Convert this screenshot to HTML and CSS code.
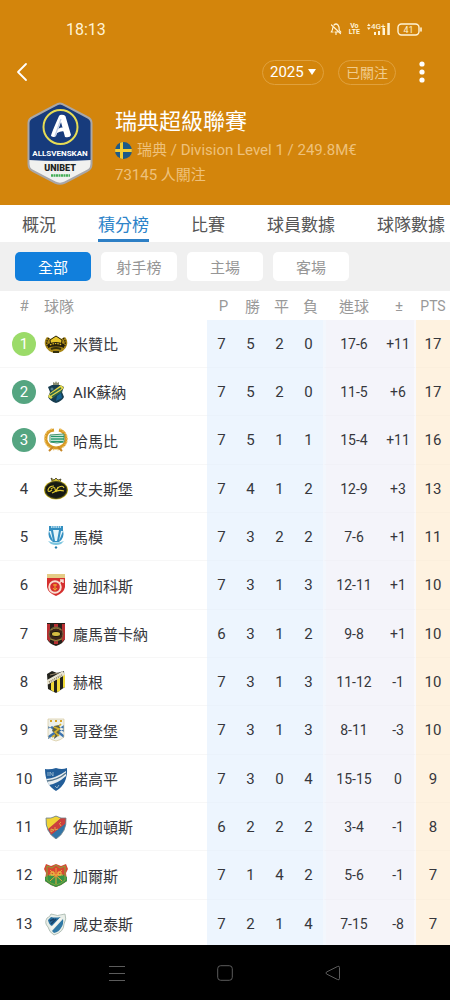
FILE: index.html
```html
<!DOCTYPE html>
<html lang="zh-Hant">
<head>
    <meta charset="utf-8">
    <meta name="viewport" content="width=device-width, initial-scale=1">
    <title>瑞典超級聯賽</title>
    <link rel="stylesheet" href="styles.css">
</head>
<body>
    <header class="header">
        <div class="status-bar">
            <span class="clock">18:13</span>
            <div class="status-icons">
                <svg width="12" height="14" viewBox="0 0 12 14" fill="none" stroke="#fff3d6" stroke-width="1.2" stroke-linecap="round" stroke-linejoin="round">
                    <path d="M4 3Q6 1 8 3Q9.300 4.500 9.200 8L10.800 10H5M2.800 5.500Q2.800 8 1.200 10H3M6 10V12.500M1.500 3L10.500 11.500"/>
                </svg>
                <span class="volte"><span>Vo</span><span>LTE</span></span>
                <svg width="23" height="14" viewBox="0 0 23 14" fill="#fff3d6">
                    <path d="M0 4L1.800 1.500L3.600 4ZM0 5.500H3.600L1.800 8Z"/>
                    <text x="4" y="7" class="svg-net">4G+</text>
                    <path d="M7 10H9V13H7ZM11 9H13V13H11ZM15.500 6H18V13H15.500ZM20.300 1H22.800V13H20.300Z"/>
                </svg>
                <svg width="25" height="13" viewBox="0 0 25 13" fill="none" stroke="#fff3d6">
                    <rect x="1" y="1" width="21" height="11" rx="3.500" stroke-width="1.400"/>
                    <path d="M24 5V8" stroke-width="1.600" stroke-linecap="round"/>
                    <text x="11.500" y="9.500" text-anchor="middle" class="svg-battery">41</text>
                </svg>
            </div>
        </div>

        <div class="toolbar">
            <button type="button" class="icon-button back" aria-label="返回">
                <svg width="12" height="20" viewBox="0 0 12 20" fill="none" stroke="#fff" stroke-width="1.800" stroke-linecap="round" stroke-linejoin="round"><path d="M10 2L2 10L10 18"/></svg>
            </button>
            <label class="pill season">
                <select aria-label="賽季">
                    <option>2025</option>
                </select>
                <svg width="8" height="6" viewBox="0 0 8 6" fill="#fff"><path d="M0 0H8L4 6Z"/></svg>
            </label>
            <button type="button" class="pill follow">已關注</button>
            <button type="button" class="icon-button" aria-label="更多">
                <svg width="6" height="22" viewBox="0 0 6 22" fill="#fff"><circle cx="3" cy="3" r="2.600"/><circle cx="3" cy="11" r="2.600"/><circle cx="3" cy="19" r="2.600"/></svg>
            </button>
        </div>

        <div class="league">
            <svg class="league-logo" width="66" height="84" viewBox="0 0 66 84">
                <defs>
                    <clipPath id="logoShape"><path d="M33 2Q35 2 38 4L60 15Q64 17 64 21V62Q64 67 60 69L38 80Q33 83 28 80L6 69Q2 67 2 62V21Q2 17 6 15L28 4Q31 2 33 2Z"/></clipPath>
                </defs>
                <g clip-path="url(#logoShape)">
                    <rect width="66" height="84" fill="#173b7c"/>
                    <path d="M0 58Q33 60 66 58V84H0Z" fill="#f1f1ef"/>
                </g>
                <path d="M33 1.500Q35 1.500 38 3.500L60 15Q64.500 17 64.500 21V62Q64.500 67 60 69L38 80.500Q33 83 28 80.500L6 69Q1.500 67 1.500 62V21Q1.500 17 6 15L28 3.500Q31 1.500 33 1.500Z" fill="none" stroke="#a9a7a8" stroke-width="2"/>
                <circle cx="33.500" cy="25" r="17" fill="#173b7c" stroke="#e6dc55" stroke-width="2"/>
                <path d="M24 34Q24 32 32 14Q33 12 37 13Q39 14 39 16L44 33Q43 36 38 35L34 20L29 34Q27 36 24 34Z" fill="#fff"/>
                <path d="M30 29Q32 24 38 26L39 30Q35 28 30 31Z" fill="#fff"/>
                <path d="M34 17L28 34" stroke="#bdcbe5" stroke-width="1.200"/>
                <text x="33" y="54" text-anchor="middle" class="logo-name">ALLSVENSKAN</text>
                <text x="33" y="69" text-anchor="middle" class="logo-sponsor">UNIBET</text>
                <path d="M24 73.500H43" stroke="#43ad55" stroke-width="2.500" stroke-dasharray="2 .5"/>
            </svg>
            <div class="league-info">
                <h1>瑞典超級聯賽</h1>
                <p>
                    <svg width="17" height="17" viewBox="0 0 17 17">
                        <circle cx="8.500" cy="8.500" r="8.500" fill="#1d5a88"/>
                        <path d="M5 .8Q6.500 0 8 0V17Q6.500 17 5 16.200ZM.2 7H16.800V10H.2Q0 8.500 .2 7Z" fill="#f3cd35"/>
                    </svg>
                    瑞典 / Division Level 1 / 249.8M€
                </p>
                <p>73145 人關注</p>
            </div>
        </div>
    </header>

    <nav class="tabs">
        <a href="#">概況</a>
        <a href="#" class="active">積分榜</a>
        <a href="#">比賽</a>
        <a href="#">球員數據</a>
        <a href="#">球隊數據</a>
    </nav>

    <div class="filters">
        <button type="button" class="selected">全部</button>
        <button type="button">射手榜</button>
        <button type="button">主場</button>
        <button type="button">客場</button>
    </div>

    <main class="standings">
        <table>
            <thead>
                <tr>
                    <th class="rank">#</th>
                    <th class="team">球隊</th>
                    <th class="stat">P</th>
                    <th class="stat">勝</th>
                    <th class="stat">平</th>
                    <th class="stat">負</th>
                    <th class="goals">進球</th>
                    <th class="diff">±</th>
                    <th class="pts">PTS</th>
                </tr>
            </thead>
            <tbody>
                <tr>
                    <td class="rank"><span class="place first">1</span></td>
                    <td class="team"><div class="club">
                        <svg class="crest" viewBox="0 0 24 24">
                            <path d="M3 5Q0 8 1 13Q3 20 12 21Q21 20 23 13Q24 8 21 5L17 7Q12 2 7 7Z" fill="#a88717"/>
                            <path d="M5 6Q1 10 4 15M19 6Q23 10 20 15" fill="none" stroke="#33290c" stroke-width="1.500" stroke-dasharray="1.500 1"/>
                            <path d="M6 8L9 6L12 4L15 6L18 8L17 14H7Z" fill="#e8c72c" stroke="#2c260c"/>
                            <path d="M4 12Q12 8 20 12V16Q12 12 4 16Z" fill="#231e0d"/>
                            <path d="M6 13Q12 10 18 13" fill="none" stroke="#e3bf25" stroke-width="1.200" stroke-dasharray="1.500 1"/>
                            <path d="M7 17Q12 15 17 17M9 20H15" fill="none" stroke="#36300d" stroke-width="2"/>
                        </svg>米贊比</div></td>
                    <td class="stat">7</td><td class="stat">5</td><td class="stat">2</td><td class="stat">0</td>
                    <td class="goals">17-6</td><td class="diff">+11</td><td class="pts">17</td>
                </tr>
                <tr>
                    <td class="rank"><span class="place">2</span></td>
                    <td class="team"><div class="club">
                        <svg class="crest" viewBox="0 0 24 24">
                            <path d="M9 5V2L11 3L12 1L13 3L15 2V5Z" fill="#888c70"/>
                            <path d="M4 7L8 5H16L20 7L18 12L20 17Q18 21 12 23Q6 21 4 17L6 12Z" fill="#173d50"/>
                            <path d="M4 17L6 13L17 5L20 8L7 19Z" fill="#e5d64a"/>
                            <path d="M6 15L17 8M8 17L18 11" stroke="#2e674a" stroke-width="1.500"/>
                            <path d="M13 16L17 13L18 18L12 21Z" fill="#176392"/>
                            <circle cx="8" cy="9" r="1.500" fill="#55828d"/>
                        </svg>AIK蘇納</div></td>
                    <td class="stat">7</td><td class="stat">5</td><td class="stat">2</td><td class="stat">0</td>
                    <td class="goals">11-5</td><td class="diff">+6</td><td class="pts">17</td>
                </tr>
                <tr>
                    <td class="rank"><span class="place">3</span></td>
                    <td class="team"><div class="club">
                        <svg class="crest" viewBox="0 0 24 24">
                            <path d="M10 2Q1 3 2 12Q3 19 12 20Q22 19 22 11Q22 4 15 2" fill="none" stroke="#d89a24" stroke-width="3"/>
                            <path d="M8 1Q0 4 1 13Q3 20 11 22M16 1Q24 5 23 13Q21 20 13 22" fill="none" stroke="#efc261" stroke-dasharray="1.500 1.500" stroke-width="1.500"/>
                            <path d="M6 7L20 6V14Q13 16 6 14Z" fill="#f3faf4" stroke="#48956f"/>
                            <path d="M7 8.500H20M7 11H20M7 13.500H19" stroke="#27966b" stroke-width="1.300"/>
                            <path d="M9 19L5 23M14 19L18 23" stroke="#c78626" stroke-width="2"/>
                        </svg>哈馬比</div></td>
                    <td class="stat">7</td><td class="stat">5</td><td class="stat">1</td><td class="stat">1</td>
                    <td class="goals">15-4</td><td class="diff">+11</td><td class="pts">16</td>
                </tr>
                <tr>
                    <td class="rank">4</td>
                    <td class="team"><div class="club">
                        <svg class="crest" viewBox="0 0 24 24">
                            <path d="M8 4L7 1L10 3L12 1L14 3L17 2L16 5Z" fill="#d1ba31" stroke="#292817" stroke-width=".7"/>
                            <ellipse cx="12" cy="13" rx="12" ry="9.500" fill="#dac42d"/>
                            <ellipse cx="12" cy="13" rx="11" ry="8.500" fill="#171a13" stroke="#4a481b"/>
                            <path d="M10 9Q5 9 4 13Q4 16 8 13M7 12Q11 9 11 12T15 10Q19 8 20 11M8 16Q14 12 20 14M14 10L12 15" fill="none" stroke="#e1ca32" stroke-width="1.100"/>
                        </svg>艾夫斯堡</div></td>
                    <td class="stat">7</td><td class="stat">4</td><td class="stat">1</td><td class="stat">2</td>
                    <td class="goals">12-9</td><td class="diff">+3</td><td class="pts">13</td>
                </tr>
                <tr>
                    <td class="rank">5</td>
                    <td class="team"><div class="club">
                        <svg class="crest" viewBox="0 0 24 24">
                            <path d="M5 1H19V5Q21 13 15 17H9Q3 13 5 5Z" fill="#338fc1"/>
                            <path d="M7 2H17" stroke="#d9f2fb" stroke-width="1.500" stroke-dasharray="1.500 .7"/>
                            <path d="M9 5H15L13 16H11ZM5 6H7L9 16ZM19 6H17L15 16Z" fill="#e4f5fa"/>
                            <path d="M4 16Q12 19 20 16L17 19Q12 21 7 19Z" fill="#7bc5df"/>
                            <path d="M12 21L13.500 22.500L12 24L10.500 22.500Z" fill="#267caa"/>
                        </svg>馬模</div></td>
                    <td class="stat">7</td><td class="stat">3</td><td class="stat">2</td><td class="stat">2</td>
                    <td class="goals">7-6</td><td class="diff">+1</td><td class="pts">11</td>
                </tr>
                <tr>
                    <td class="rank">6</td>
                    <td class="team"><div class="club">
                        <svg class="crest" viewBox="0 0 24 24">
                            <path d="M3 2H21V14Q20 20 12 23Q4 20 3 14Z" fill="#d52f2e"/>
                            <path d="M3 1H21V5H3Z" fill="#e5cc86"/>
                            <circle cx="11" cy="14" r="5.800" fill="none" stroke="#f8ded1" stroke-width="1.900"/>
                            <path d="M15 10L19 7M16 7H19V10" fill="none" stroke="#f8ded1" stroke-width="1.500"/>
                            <path d="M9 12H13M11 11V17M9 15Q11 19 13 15" fill="none" stroke="#efb32d"/>
                        </svg>迪加科斯</div></td>
                    <td class="stat">7</td><td class="stat">3</td><td class="stat">1</td><td class="stat">3</td>
                    <td class="goals">12-11</td><td class="diff">+1</td><td class="pts">10</td>
                </tr>
                <tr>
                    <td class="rank">7</td>
                    <td class="team"><div class="club">
                        <svg class="crest" viewBox="0 0 24 24">
                            <path d="M3 1H21V17Q19 22 12 24Q5 22 3 17Z" fill="#272019"/>
                            <path d="M3 2H6V20L3 17ZM10 2H14V22H10ZM18 2H21V17L18 20Z" fill="#b82f32"/>
                            <circle cx="12" cy="12" r="7" fill="#3d2519" stroke="#766540"/>
                            <ellipse cx="12" cy="12" rx="4.500" ry="2.500" fill="#d6bd43" stroke="#17150f"/>
                            <path d="M6 17Q12 20 18 17M7 8Q12 4 17 8" fill="none" stroke="#9e8a3d"/>
                        </svg>龐馬普卡納</div></td>
                    <td class="stat">6</td><td class="stat">3</td><td class="stat">1</td><td class="stat">2</td>
                    <td class="goals">9-8</td><td class="diff">+1</td><td class="pts">10</td>
                </tr>
                <tr>
                    <td class="rank">8</td>
                    <td class="team"><div class="club">
                        <svg class="crest" viewBox="0 0 24 24">
                            <path d="M3 4L8 1L13 3L20 1L21 17L12 23L4 19Z" fill="#22221c"/>
                            <path d="M7 13L10 11V22L7 20ZM13 9L16 7V21L13 22ZM19 6L21 4V17L19 18Z" fill="#f0da36"/>
                            <path d="M3 15V10L19 1L21 5Z" fill="#e8e4d2"/>
                            <path d="M5 12L18 5" stroke="#8e8157" stroke-dasharray="1 1" stroke-width="1.500"/>
                            <path d="M6 5L14 3" stroke="#95866a"/>
                        </svg>赫根</div></td>
                    <td class="stat">7</td><td class="stat">3</td><td class="stat">1</td><td class="stat">3</td>
                    <td class="goals">11-12</td><td class="diff">-1</td><td class="pts">10</td>
                </tr>
                <tr>
                    <td class="rank">9</td>
                    <td class="team"><div class="club">
                        <svg class="crest" viewBox="0 0 24 24">
                            <path d="M4 1H20V19Q17 22 12 23Q7 22 4 19Z" fill="#edf0eb"/>
                            <path d="M4 11L8 8L20 17V20L4 8ZM20 7L4 18V21L20 11ZM10 8H14L20 11V14Z" fill="#3c73af"/>
                            <path d="M6 3H8M11 3H13M16 3H18" stroke="#d8a52c" stroke-width="2"/>
                            <path d="M10 8L15 7L16 12L14 18L10 21L11 15L8 13Z" fill="#5c6148"/>
                            <path d="M10 9L15 11L11 14L15 18M15 8L17 6M8 19L11 17" fill="none" stroke="#d5b12b" stroke-width="1.700"/>
                            <path d="M4 1H20V19Q17 22 12 23Q7 22 4 19Z" fill="none" stroke="#d8c99b" stroke-width=".7"/>
                        </svg>哥登堡</div></td>
                    <td class="stat">7</td><td class="stat">3</td><td class="stat">1</td><td class="stat">3</td>
                    <td class="goals">8-11</td><td class="diff">-3</td><td class="pts">10</td>
                </tr>
                <tr>
                    <td class="rank">10</td>
                    <td class="team"><div class="club">
                        <svg class="crest" viewBox="0 0 24 24">
                            <path d="M1 2Q6 3 12 1Q18 3 23 1Q24 17 12 24Q1 18 1 2Z" fill="#235e99"/>
                            <path d="M2 12Q12 11 22 4V9Q13 17 5 18Z" fill="#e8edf0"/>
                            <path d="M3 14Q14 13 22 6" fill="none" stroke="#57778d" stroke-width="1.300"/>
                            <path d="M4 5V9M6 9V5L9 9V5M11 19L13 21L15 18" fill="none" stroke="#8fb0ca"/>
                        </svg>諾高平</div></td>
                    <td class="stat">7</td><td class="stat">3</td><td class="stat">0</td><td class="stat">4</td>
                    <td class="goals">15-15</td><td class="diff">0</td><td class="pts">9</td>
                </tr>
                <tr>
                    <td class="rank">11</td>
                    <td class="team"><div class="club">
                        <svg class="crest" viewBox="0 0 24 24">
                            <path d="M2 3Q7 4 12 1Q17 4 22 3Q23 17 12 24Q1 17 2 3Z" fill="#3275a6"/>
                            <path d="M2 3Q7 4 12 1Q16 3 17 3L4 15Q2 9 2 3Z" fill="#f1d435"/>
                            <path d="M4 14L17 3L22 3Q22 8 21 9L7 20Z" fill="#cd403d"/>
                            <path d="M7 14V17L10 15ZM11 12V15L14 14M17 7Q14 8 17 11" fill="none" stroke="#e2bf49" stroke-width=".8"/>
                            <path d="M2 3Q7 4 12 1Q17 4 22 3Q23 17 12 24Q1 17 2 3Z" fill="none" stroke="#75848a" stroke-width=".8"/>
                        </svg>佐加頓斯</div></td>
                    <td class="stat">6</td><td class="stat">2</td><td class="stat">2</td><td class="stat">2</td>
                    <td class="goals">3-4</td><td class="diff">-1</td><td class="pts">8</td>
                </tr>
                <tr>
                    <td class="rank">12</td>
                    <td class="team"><div class="club">
                        <svg class="crest" viewBox="0 0 24 24">
                            <path d="M2 1L7 3L12 1L17 3L22 1L24 6L22 10L23 18Q18 22 12 24Q6 22 1 18L2 10L0 6Z" fill="#d84733"/>
                            <path d="M1 14L7 11L12 14L18 11L23 14V18Q18 22 12 24Q6 22 1 18Z" fill="#389345"/>
                            <path d="M3 3L8 5L12 2L16 5L21 3L21 17Q17 21 12 22Q7 21 3 17Z" fill="none" stroke="#81a93b"/>
                            <path d="M6 7L18 18M18 7L6 18M12 5V21M5 12H19" stroke="#efa33c"/>
                            <path d="M7 9H10V12H7ZM14 9H17V12H14Z" fill="none" stroke="#eac945"/>
                        </svg>加爾斯</div></td>
                    <td class="stat">7</td><td class="stat">1</td><td class="stat">4</td><td class="stat">2</td>
                    <td class="goals">5-6</td><td class="diff">-1</td><td class="pts">7</td>
                </tr>
                <tr>
                    <td class="rank">13</td>
                    <td class="team"><div class="club">
                        <svg class="crest" viewBox="0 0 24 24">
                            <path d="M7 2Q13 5 21 2Q23 7 20 12Q20 20 10 23Q5 20 4 15Q0 11 3 6Q6 5 7 2Z" fill="#e8eee8" stroke="#a2b3a8" stroke-width=".8"/>
                            <path d="M7 5Q11 6 17 5L8 14Q5 13 4 8Z" fill="#286f9f"/>
                            <path d="M19 7Q20 12 17 16Q15 20 10 21L8 19Z" fill="#2f78a5"/>
                            <path d="M6 9L10 7M7 12L12 7" stroke="#163f66" stroke-width="1.500"/>
                            <path d="M17 6L7 17" stroke="#f5f6ef" stroke-width="2"/>
                        </svg>咸史泰斯</div></td>
                    <td class="stat">7</td><td class="stat">2</td><td class="stat">1</td><td class="stat">4</td>
                    <td class="goals">7-15</td><td class="diff">-8</td><td class="pts">7</td>
                </tr>
            </tbody>
        </table>
    </main>

    <footer class="system-nav">
        <button type="button" aria-label="最近">
            <svg width="16" height="16" viewBox="0 0 16 16" fill="none" stroke="#5c5c5c"><path d="M0 1.500H16M0 8.500H16M0 15.500H16"/></svg>
        </button>
        <button type="button" aria-label="主畫面">
            <svg width="16" height="16" viewBox="0 0 16 16" fill="none" stroke="#5c5c5c"><rect x=".7" y=".7" width="14.600" height="14.600" rx="3"/></svg>
        </button>
        <button type="button" aria-label="返回上頁">
            <svg width="16" height="16" viewBox="0 0 16 16" fill="none" stroke="#5c5c5c" stroke-linejoin="round"><path d="M14.500 2.500V13.500Q14.500 15.500 12.500 14.500L1.500 9Q.5 8 1.500 7L12.500 1.500Q14.500 .5 14.500 2.500Z"/></svg>
        </button>
    </footer>
</body>
</html>
```
FILE: styles.css
```css
* {
    box-sizing: border-box;
}
body {
    display: flex;
    flex-direction: column;
    height: 100vh;
    margin: 0;
    background-color: #fff;
    color: #36373c;
    font-family: Roboto, "Noto Sans CJK TC", sans-serif;
    font-size: 15px;
}
button, select {
    margin: 0;
    padding: 0;
    border: none;
    background: none;
    font-family: inherit;
    cursor: pointer;
}
svg {
    display: block;
    flex: none;
}

/* Header */
.header {
    flex: none;
    padding-bottom: 17px;
    background-color: #d3850c;
    color: #fff;
}
.status-bar {
    display: flex;
    align-items: center;
    justify-content: space-between;
    height: 58px;
    padding: 0 28px 0 66px;
}
.clock {
    color: #fff3d6;
    font-size: 16px;
}
.status-icons {
    display: flex;
    align-items: center;
    gap: 7px;
}
.volte {
    display: flex;
    flex-direction: column;
    color: #fff3d6;
    font-size: 7px;
    font-weight: 700;
    line-height: 6px;
    text-align: center;
}
.svg-net {
    font-size: 8px;
    font-weight: 500;
}
.svg-battery {
    fill: #fff3d6;
    stroke: none;
    font-size: 9px;
}
.toolbar {
    display: flex;
    align-items: center;
    gap: 14px;
    height: 28px;
    padding: 0 16px;
}
.icon-button {
    display: flex;
    align-items: center;
    justify-content: center;
    width: 24px;
    height: 28px;
}
.back {
    justify-content: flex-start;
    margin-right: auto;
}
.pill {
    display: flex;
    align-items: center;
    justify-content: center;
    height: 25px;
    border: 1px solid #e0a13d;
    border-radius: 13px;
}
.season {
    gap: 4px;
    padding: 0 7px;
}
.season select {
    appearance: none;
    color: #fff;
    font-size: 15px;
}
.follow {
    padding: 0 7px;
    color: #f0cb8b;
    font-size: 14px;
}
.league {
    display: flex;
    align-items: flex-start;
    gap: 22px;
    padding: 16px 16px 0 27px;
}
.logo-name {
    fill: #fff;
    font-size: 8px;
    font-weight: 700;
}
.logo-sponsor {
    fill: #1d2421;
    font-size: 9px;
    font-weight: 900;
}
.league-info {
    padding-top: 4px;
}
.league-info h1 {
    margin: 0;
    font-size: 22px;
    font-weight: 400;
    line-height: 32px;
}
.league-info p {
    display: flex;
    align-items: center;
    gap: 5px;
    margin: 0;
    color: #eec17b;
    line-height: 25px;
}

/* Tabs */
.tabs {
    display: flex;
    flex: none;
    gap: 42px;
    height: 37px;
    padding: 0 22px;
    overflow: hidden;
    white-space: nowrap;
}
.tabs a {
    border-bottom: 3px solid transparent;
    color: #555;
    font-size: 17px;
    line-height: 40px;
    text-decoration: none;
}
.tabs .active {
    border-color: #2d7fc5;
    color: #2d84c9;
}

/* Filters */
.filters {
    display: flex;
    flex: none;
    gap: 10px;
    padding: 10px 15px;
    background-color: #f0f0f0;
}
.filters button {
    width: 76px;
    height: 29px;
    border-radius: 5px;
    background-color: #fff;
    color: #969696;
    font-size: 15px;
}
.filters .selected {
    background-color: #117fdc;
    color: #fff;
}

/* Standings */
.standings {
    flex: 1;
    min-height: 0;
    overflow: hidden;
}
table {
    width: 100%;
    border-spacing: 0;
    table-layout: fixed;
}
th, td {
    padding: 0;
    text-align: center;
}
th {
    height: 29px;
    color: #999;
    font-weight: 400;
}
td {
    height: 48px;
    border-bottom: 1px solid #f7f7f7;
}
tr:nth-child(3n) td {
    height: 49px;
}
.rank {
    width: 44px;
    padding-left: 4px;
}
.team {
    text-align: left;
}
.stat {
    width: 29px;
}
th.stat {
    padding-left: 4px;
}
.goals {
    width: 59px;
}
th.goals {
    padding-left: 3px;
}
.diff {
    width: 34px;
}
.pts {
    width: 34px;
}
td.goals, td.diff, th.pts {
    font-size: 14px;
}
td.stat {
    background-color: #edf5fe;
    border-bottom-color: #eaf2fb;
}
td.goals {
    border-left: 3px solid #f3f7fd;
}
td.goals, td.diff {
    background-color: #f4f4fa;
    border-bottom-color: #f1f1f7;
}
td.diff {
    border-right: 2px solid #f9f9fc;
}
td.pts {
    background-color: #fef2e0;
    border-bottom-color: #fbefdd;
}
.place {
    display: block;
    width: 24px;
    margin: 0 auto;
    border-radius: 50%;
    background-color: #55a581;
    color: #fff;
    line-height: 24px;
}
.first {
    background-color: #9bdb69;
}
.club {
    display: flex;
    align-items: center;
    gap: 5px;
    white-space: nowrap;
}
.crest {
    width: 24px;
    height: 24px;
}

/* Android navigation */
.system-nav {
    display: flex;
    flex: none;
    align-items: center;
    justify-content: center;
    gap: 92px;
    height: 55px;
    background-color: #000;
}
```
